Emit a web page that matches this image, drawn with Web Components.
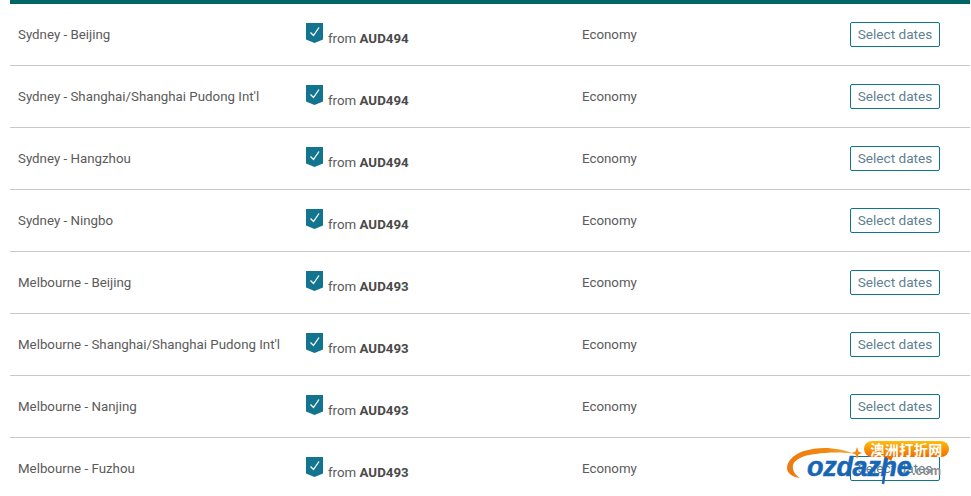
<!DOCTYPE html>
<html>
<head>
<meta charset="utf-8">
<style>
  html, body { margin: 0; background: #fff; height: 496px; overflow: hidden; }
  body { font-family: Roboto, "Liberation Sans", sans-serif; color: #555; }
</style>
</head>
<body>
<fare-table>
  <fare-row route="Sydney - Beijing" price="AUD494"></fare-row>
  <fare-row route="Sydney - Shanghai/Shanghai Pudong Int'l" price="AUD494"></fare-row>
  <fare-row route="Sydney - Hangzhou" price="AUD494"></fare-row>
  <fare-row route="Sydney - Ningbo" price="AUD494"></fare-row>
  <fare-row route="Melbourne - Beijing" price="AUD493"></fare-row>
  <fare-row route="Melbourne - Shanghai/Shanghai Pudong Int'l" price="AUD493"></fare-row>
  <fare-row route="Melbourne - Nanjing" price="AUD493"></fare-row>
  <fare-row route="Melbourne - Fuzhou" price="AUD493"></fare-row>
</fare-table>
<ozdazhe-mark></ozdazhe-mark>
<script>
class FareTable extends HTMLElement {
  constructor() {
    super();
    this.attachShadow({ mode: 'open' }).innerHTML = `
      <style>
        :host { display: block; margin: 0 1px 0 10px; border-top: 4px solid #006666; }
      </style>
      <slot></slot>
    `;
  }
}

class FareRow extends HTMLElement {
  connectedCallback() {
    const shadow = this.shadowRoot ? this.shadowRoot : this.attachShadow({ mode: 'open' });
    shadow.innerHTML = `
      <style>
        :host {
          display: grid;
          grid-template-columns: 288px 276px 268px 90px;
          height: 62px;
          box-sizing: border-box;
          border-bottom: 1px solid #c8c8c8;
          padding-left: 8px;
          align-items: center;
          font-size: 13.3px;
          color: #5a5a5a;
        }
        .route, .cabin { margin-top: -1px; }
        .price { display: flex; align-items: flex-end; gap: 5px; height: 28px; margin-top: -1px; }
        .price svg { display: block; margin-bottom: 5px; }
        .price span { line-height: 16px; margin-bottom: 1px; }
        b { font-weight: 700; color: #4a4a4a; }
        .btn {
          box-sizing: border-box;
          width: 90px;
          height: 25px;
          border: 1px solid #0e7490;
          border-radius: 2px;
          color: #5f7f92;
          font-size: 13.6px;
          line-height: 23px;
          text-align: center;
        }
      </style>
      <div class="route">${this.getAttribute('route')}</div>
      <div class="price">
        <svg width="17" height="20" viewBox="0 0 17 20">
          <path d="M0 0H17V16.5L8.5 20L0 16.5Z" fill="#13748f"/>
          <path d="M4.5 9.5L7.5 12.5L13 4.5" fill="none" stroke="#fff" stroke-width="1.3"/>
        </svg>
        <span>from <b>${this.getAttribute('price')}</b></span>
      </div>
      <div class="cabin">Economy</div>
      <div class="btn">Select dates</div>
    `;
  }
}

class OzdazheMark extends HTMLElement {
  constructor() {
    super();
    this.attachShadow({ mode: 'open' }).innerHTML = `
      <style>
        :host { position: absolute; left: 786px; top: 441px; width: 170px; height: 46px; display: block; }
        svg { position: absolute; left: 0; top: 0; }
        .badge {
          position: absolute; left: 78px; top: 0; width: 85px; height: 16px;
          border-radius: 8px;
          background: linear-gradient(#ffbe10, #ef6c00);
          color: #fff;
          font: 700 14px/16px "Noto Sans CJK SC", sans-serif;
          text-align: center;
          letter-spacing: 0.5px;
        }
        .badge::after {
          content: "";
          position: absolute; left: 20px; top: 15px; width: 9px; height: 5px;
          background: #ef6c00;
          clip-path: polygon(0 0, 100% 0, 80% 100%);
        }
        .name {
          position: absolute; left: 21px; top: 9px;
          font: italic 700 27px/34px "Liberation Sans", sans-serif;
          letter-spacing: -0.3px;
          -webkit-text-stroke: 0.5px #1766b5;
          color: #1766b5;
        }
        .com {
          position: absolute; left: 126px; top: 22px;
          font: 700 12.5px/16px "Liberation Sans", sans-serif;
          color: #8c8c8c;
        }
      </style>
      <svg width="170" height="46" viewBox="0 0 170 46">
        <defs>
          <linearGradient id="sw" x1="0" y1="0" x2="1" y2="0">
            <stop offset="0" stop-color="#ee7a10"/>
            <stop offset="0.6" stop-color="#f08a12"/>
            <stop offset="1" stop-color="#f8b040"/>
          </linearGradient>
        </defs>
        <path d="M69 13C55 7 35 5 22 9C8 12 1 20 1 27C1 32 6 36 14 37C9 34 6 29 7 24C9 18 18 14 30 13C42 11 58 11 69 13Z" fill="url(#sw)"/>
        <path d="M71 6L72.5 10.5L76 12L72.5 13.5L71 18L69.5 13.5L66 12L69.5 10.5Z" fill="#f58a12"/>
        <path d="M99 28L97 43" stroke="#1766b5" stroke-width="2.5" fill="none"/>
      </svg>
      <div class="name">ozdazhe</div>
      <div class="com">.com</div>
      <div class="badge">澳洲打折网</div>
    `;
  }
}

customElements.define('fare-table', FareTable);
customElements.define('fare-row', FareRow);
customElements.define('ozdazhe-mark', OzdazheMark);
</script>
</body>
</html>
